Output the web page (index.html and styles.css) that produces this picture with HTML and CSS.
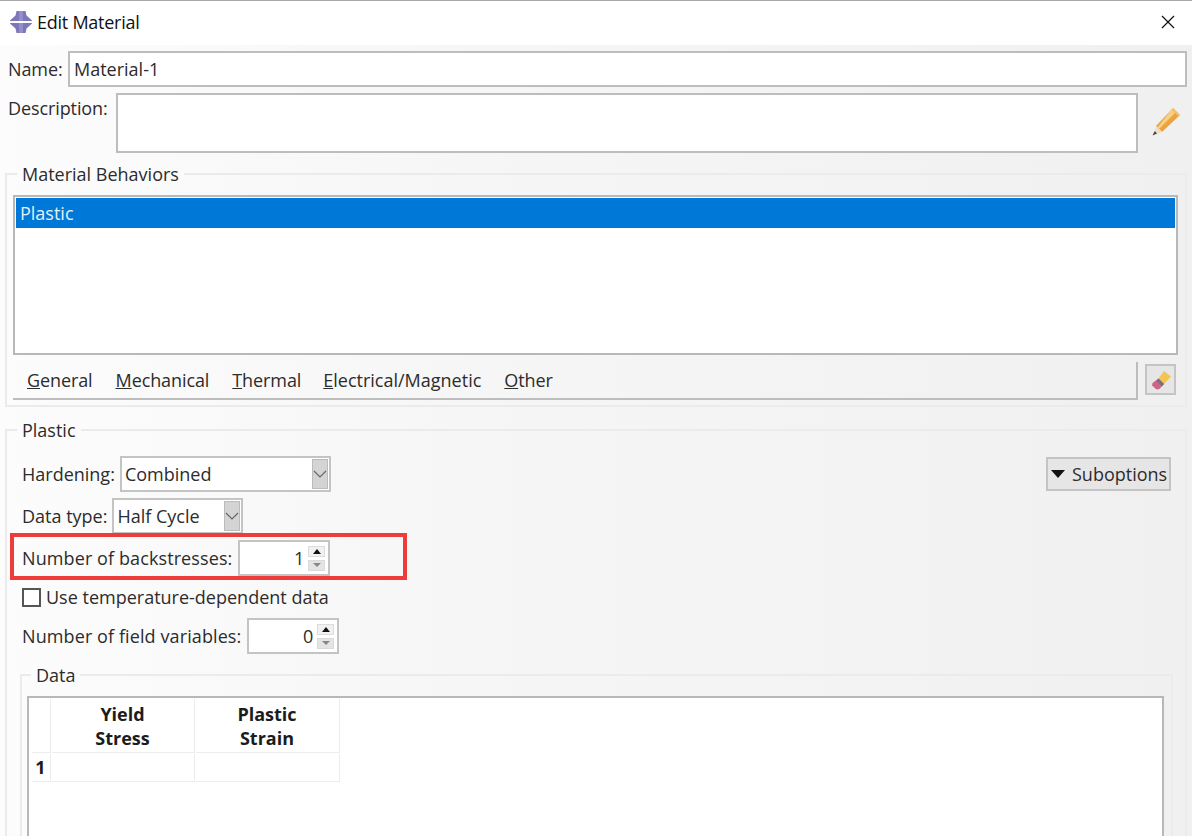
FILE: index.html
```html
<!DOCTYPE html>
<html lang="en">
<head>
    <meta charset="UTF-8">
    <meta name="viewport" content="width=device-width, initial-scale=1.0">
    <title>Edit Material</title>
    <link rel="stylesheet" href="styles.css">
</head>
<body>
    <div class="dialog">
        <div class="titlebar">
            <svg class="app-icon" width="22" height="22" viewBox="0 0 22 22">
                <path d="M6.500 0h9l1 4.500L22 9.500V10H0v-.5l5.500-5z" fill="#7c76ba"/>
                <path d="M0 12h22v.5l-5.500 5-1 4.500h-9l-1-4.500L0 12.500z" fill="#7c76ba"/>
                <path d="M9 0h4v10H9zM9 12h4v10H9z" fill="#a5a0d6" opacity="0.55"/>
            </svg>
            <span class="title">Edit Material</span>
            <svg class="close" width="14" height="14" viewBox="0 0 14 14">
                <path d="M1 1l12 12M13 1L1 13" stroke="#111" stroke-width="1.200" fill="none"/>
            </svg>
        </div>

        <div class="content">
            <div class="name-row">
                <label class="name-label">Name:</label>
                <div class="field name-field">Material-1</div>
            </div>

            <div class="desc-row">
                <label class="desc-label">Description:</label>
                <div class="field desc-field"></div>
                <svg class="pencil" width="30" height="30" viewBox="0 0 30 30">
                    <path d="M22 1l7 7L11 25 5 19z" fill="#eda33b"/>
                    <path d="M20.500 2.500l3.500 3.500L8 22l-1.500-1.500z" fill="#f8cf86"/>
                    <path d="M22 1l7 7-1.500 1.500-7-7z" fill="#f4c26c"/>
                    <path d="M5 19l6 6-8 3z" fill="#f3dfc0"/>
                    <path d="M3.800 24l2.200 2.500L1.500 28.500z" fill="#44444c"/>
                </svg>
            </div>

            <fieldset class="group behaviors">
                <legend>Material Behaviors</legend>
                <div class="listbox">
                    <div class="list-item">Plastic</div>
                </div>
                <div class="menu-row">
                    <div class="menubar">
                        <span><u>G</u>eneral</span>
                        <span><u>M</u>echanical</span>
                        <span><u>T</u>hermal</span>
                        <span class="menu-wide"><u>E</u>lectrical/Magnetic</span>
                        <span><u>O</u>ther</span>
                    </div>
                    <div class="icon-btn">
                        <svg width="22" height="22" viewBox="0 0 22 22">
                            <path d="M14 2l7 5.500L14 15 8.500 9.500z" fill="#f3c552"/>
                            <path d="M8.500 9.500L14 15l-4.500 5-3 .5L2 16.500l.5-2.500z" fill="#cf6483"/>
                            <path d="M8.500 9.500L14 15l-2 2.200-5.500-5.500z" fill="#77727c"/>
                        </svg>
                    </div>
                </div>
            </fieldset>

            <fieldset class="group plastic">
                <legend>Plastic</legend>

                <div class="top-row">
                    <div class="form-row">
                        <label>Hardening:</label>
                        <div class="combo hardening">
                            <span class="combo-text">Combined</span>
                            <span class="combo-arrow">
                                <svg width="14" height="8" viewBox="0 0 14 8"><path d="M1 1l6 6 6-6" stroke="#666" stroke-width="1.200" fill="none"/></svg>
                            </span>
                        </div>
                    </div>
                    <div class="suboptions">
                        <span class="tri"></span>Suboptions
                    </div>
                </div>

                <div class="form-row datatype">
                    <label>Data type:</label>
                    <div class="combo halfcycle">
                        <span class="combo-text">Half Cycle</span>
                        <span class="combo-arrow">
                            <svg width="14" height="8" viewBox="0 0 14 8"><path d="M1 1l6 6 6-6" stroke="#666" stroke-width="1.200" fill="none"/></svg>
                        </span>
                    </div>
                </div>

                <div class="form-row backstress">
                    <label class="spin-label">Number of backstresses:</label>
                    <div class="spin">
                        <span class="spin-val">1</span>
                        <span class="spin-btns"><i class="up"></i><i class="down"></i></span>
                    </div>
                </div>

                <div class="check-row">
                    <span class="checkbox"></span>
                    <label>Use temperature-dependent data</label>
                </div>

                <div class="form-row fieldvars">
                    <label class="spin-label">Number of field variables:</label>
                    <div class="spin">
                        <span class="spin-val">0</span>
                        <span class="spin-btns"><i class="up"></i><i class="down"></i></span>
                    </div>
                </div>

                <fieldset class="group data">
                    <legend>Data</legend>
                    <div class="table-box">
                        <div class="table">
                            <div class="cell corner"></div>
                            <div class="cell head">Yield<br>Stress</div>
                            <div class="cell head">Plastic<br>Strain</div>
                            <div class="cell rownum">1</div>
                            <div class="cell"></div>
                            <div class="cell"></div>
                        </div>
                    </div>
                </fieldset>
            </fieldset>
        </div>

        <div class="highlight"></div>
    </div>
</body>
</html>
```

FILE: styles.css
```css
html, body {
    margin: 0;
    padding: 0;
    height: 836px;
    overflow: hidden;
}
body {
    font-family: "Open Sans", "Noto Sans", "Liberation Sans", sans-serif;
    font-size: 18px;
    color: #2c2c2c;
}
.dialog {
    position: relative;
    width: 1192px;
    height: 836px;
    overflow: hidden;
    background: linear-gradient(90deg, #fcfcfc 0%, #f6f6f6 40%, #f0f0f0 100%);
}
.titlebar {
    display: flex;
    align-items: center;
    height: 42px;
    padding: 0 17px 2px 10px;
    background: #fff;
    border-top: 1px solid #a8a8a8;
}
.app-icon {
    margin-right: 5px;
}
.title {
    flex: 1;
    color: #111;
    letter-spacing: -0.25px;
}
.content {
    padding: 6px 5px 0 5px;
}
.field {
    background: #fff;
    border: 2px solid #bdbdbd;
    box-sizing: border-box;
}
.name-row {
    display: flex;
    align-items: center;
}
.name-label {
    width: 63px;
    padding-left: 3px;
    box-sizing: border-box;
    letter-spacing: -0.1px;
}
.name-field {
    flex: 1;
    height: 36px;
    line-height: 32px;
    padding-left: 4px;
}
.desc-row {
    display: flex;
    margin-top: 6px;
}
.desc-label {
    width: 111px;
    padding: 3px 0 0 3px;
    box-sizing: border-box;
    letter-spacing: -0.1px;
}
.desc-field {
    width: 1022px;
    height: 60px;
}
.pencil {
    margin: 14px 0 0 13px;
}
.group {
    margin: 0;
    padding: 0;
    min-width: 0;
    border: 2px solid #ebebeb;
}
.group legend {
    padding: 0 5px;
    line-height: 24px;
}
.behaviors {
    height: 245px;
    margin-top: 9px;
    padding: 9px 7px 0 6px;
    box-sizing: border-box;
}
.behaviors legend {
    margin-left: 4px;
}
.listbox {
    height: 160px;
    padding: 1px;
    background: #fff;
    border: 2px solid #b8b8b8;
    box-sizing: border-box;
}
.list-item {
    height: 30px;
    line-height: 30px;
    padding-left: 4px;
    background: #0078d7;
    color: #e4effa;
}
.menu-row {
    display: flex;
    align-items: flex-start;
    margin-top: 7px;
}
.menubar {
    display: flex;
    gap: 23px;
    width: 1125px;
    height: 38px;
    padding-left: 14px;
    line-height: 37px;
    box-sizing: border-box;
    letter-spacing: -0.1px;
    border-right: 2px solid #bdbdbd;
    border-bottom: 2px solid #bdbdbd;
}
.menu-wide {
    margin-left: -1px;
    letter-spacing: 0;
}
.icon-btn {
    display: flex;
    align-items: center;
    justify-content: center;
    width: 31px;
    height: 31px;
    margin: 2px 0 0 7px;
    background: #e6e6e6;
    border: 2px solid #c4c4c4;
    box-sizing: border-box;
}
.plastic {
    height: 430px;
    margin-top: 11px;
    padding: 14px 14px 0 15px;
    box-sizing: border-box;
}
.plastic > legend {
    margin-left: -5px;
}
.top-row {
    display: flex;
    justify-content: space-between;
    align-items: center;
}
.form-row {
    display: flex;
    align-items: center;
}
.form-row label {
    margin-right: 5px;
}
.form-row .spin-label {
    margin-right: 6px;
    letter-spacing: 0.1px;
}
.combo {
    display: flex;
    align-items: center;
    justify-content: space-between;
    height: 36px;
    padding: 1px;
    background: #fff;
    border: 2px solid #c4c4c4;
    box-sizing: border-box;
}
.hardening {
    width: 211px;
}
.halfcycle {
    width: 131px;
}
.datatype {
    margin-top: 6px;
}
.combo-text {
    padding-left: 2px;
}
.combo-arrow {
    display: flex;
    align-items: center;
    justify-content: center;
    width: 16px;
    height: 30px;
    background: #d4d4d4;
    border: 1px solid #bbb;
    box-sizing: border-box;
}
.suboptions {
    display: flex;
    align-items: center;
    width: 125px;
    height: 34px;
    background: #e6e6e6;
    border: 2px solid #c4c4c4;
    box-sizing: border-box;
    padding-left: 3px;
}
.tri {
    width: 0;
    height: 0;
    margin-right: 7px;
    border-left: 7px solid transparent;
    border-right: 7px solid transparent;
    border-top: 8px solid #111;
}
.backstress {
    margin-top: 6px;
}
.spin {
    display: flex;
    align-items: center;
    justify-content: flex-end;
    width: 92px;
    height: 36px;
    padding-right: 3px;
    background: #fff;
    border: 2px solid #c4c4c4;
    box-sizing: border-box;
}
.spin-val {
    margin-right: 4px;
}
.spin-btns {
    display: flex;
    flex-direction: column;
    gap: 3px;
    width: 17px;
}
.spin-btns i {
    display: flex;
    align-items: center;
    justify-content: center;
    height: 11px;
    box-sizing: border-box;
}
.spin-btns .up {
    background: #f1f1f1;
    border: 1px solid #dcdcdc;
}
.spin-btns .down {
    background: #e4e4e4;
    border: 1px solid #dadada;
}
.spin-btns i::after {
    content: "";
    width: 0;
    height: 0;
    border-left: 4px solid transparent;
    border-right: 4px solid transparent;
}
.up::after {
    border-bottom: 5px solid #111;
}
.down::after {
    border-top: 4px solid #888;
}
.check-row {
    display: flex;
    align-items: center;
    margin-top: 9px;
}
.checkbox {
    width: 19px;
    height: 19px;
    margin-right: 5px;
    background: #fff;
    border: 2px solid #555;
    box-sizing: border-box;
}
.fieldvars {
    margin-top: 9px;
}
.data {
    height: 200px;
    margin: 9px -2px 0 -2px;
    padding: 9px 7px 0 5px;
    box-sizing: border-box;
}
.data legend {
    margin-left: 4px;
}
.table-box {
    height: 170px;
    padding: 0 2px;
    background: #fff;
    border: 2px solid #b8b8b8;
    box-sizing: border-box;
}
.table {
    display: grid;
    grid-template-columns: 19px 143px 144px;
    grid-template-rows: 54px 28px;
    width: 308px;
    gap: 1px;
}
.cell {
    box-shadow: 1px 1px 0 #ececec;
    text-align: center;
    line-height: 24px;
    font-weight: 700;
    color: #1c1c1c;
}
.cell.head {
    padding-top: 4px;
    box-sizing: border-box;
}
.cell.rownum {
    line-height: 28px;
}
.highlight {
    position: absolute;
    left: 10px;
    top: 533px;
    width: 397px;
    height: 47px;
    border: 4px solid #ee3b3b;
    box-sizing: border-box;
}
```
